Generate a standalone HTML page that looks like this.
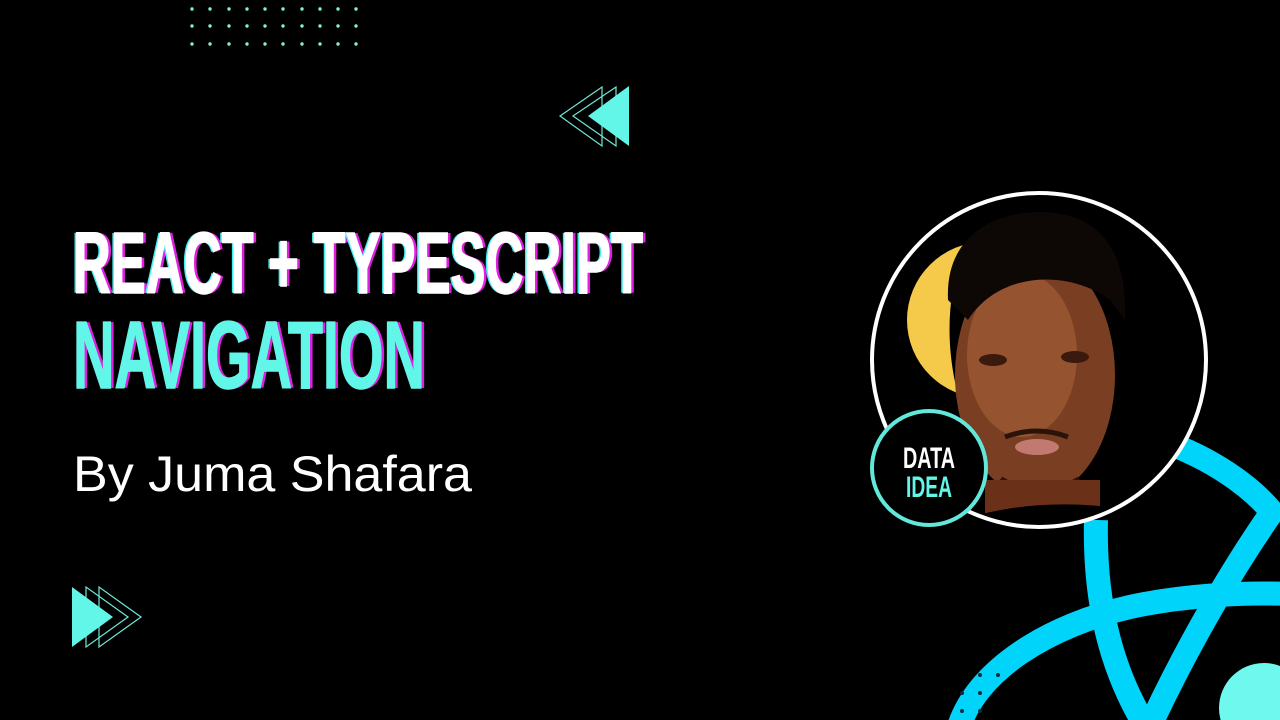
<!DOCTYPE html>
<html><head><meta charset="utf-8"><style>
html,body{margin:0;padding:0;background:#000;width:1280px;height:720px;overflow:hidden}
svg{display:block}
</style></head><body>
<svg width="1280" height="720" viewBox="0 0 1280 720" xmlns="http://www.w3.org/2000/svg">
<rect width="1280" height="720" fill="#000"/>
<g fill="#7ff0e0">
<circle cx="192" cy="9" r="1.7"/><circle cx="210" cy="9" r="1.7"/><circle cx="229" cy="9" r="1.7"/><circle cx="247" cy="9" r="1.7"/><circle cx="265" cy="9" r="1.7"/><circle cx="283" cy="9" r="1.7"/><circle cx="302" cy="9" r="1.7"/><circle cx="320" cy="9" r="1.7"/><circle cx="338" cy="9" r="1.7"/><circle cx="356" cy="9" r="1.7"/>
<circle cx="192" cy="26" r="1.7"/><circle cx="210" cy="26" r="1.7"/><circle cx="229" cy="26" r="1.7"/><circle cx="247" cy="26" r="1.7"/><circle cx="265" cy="26" r="1.7"/><circle cx="283" cy="26" r="1.7"/><circle cx="302" cy="26" r="1.7"/><circle cx="320" cy="26" r="1.7"/><circle cx="338" cy="26" r="1.7"/><circle cx="356" cy="26" r="1.7"/>
<circle cx="192" cy="44" r="1.7"/><circle cx="210" cy="44" r="1.7"/><circle cx="229" cy="44" r="1.7"/><circle cx="247" cy="44" r="1.7"/><circle cx="265" cy="44" r="1.7"/><circle cx="283" cy="44" r="1.7"/><circle cx="302" cy="44" r="1.7"/><circle cx="320" cy="44" r="1.7"/><circle cx="338" cy="44" r="1.7"/><circle cx="356" cy="44" r="1.7"/>
</g>
<polygon points="560,116 602,87 602,146" fill="none" stroke="#6fe8d8" stroke-width="1.2"/>
<polygon points="573,116 616,87 616,146" fill="none" stroke="#6fe8d8" stroke-width="1.2"/>
<polygon points="588,116 629,86 629,146" fill="#62f6e8"/>
<polygon points="99,587 99,647 141,617" fill="none" stroke="#6fe8d8" stroke-width="1.2"/>
<polygon points="86,587 86,647 128,617" fill="none" stroke="#6fe8d8" stroke-width="1.2"/>
<polygon points="72,587 72,647 113,617" fill="#62f6e8"/>
<g font-family="'Liberation Sans Narrow','Liberation Sans',sans-serif" font-weight="bold">
<text x="76" y="293" font-size="87" textLength="570" lengthAdjust="spacingAndGlyphs" fill="#e020e0">REACT + TYPESCRIPT</text>
<text x="71" y="293" font-size="87" textLength="570" lengthAdjust="spacingAndGlyphs" fill="#40f0f0">REACT + TYPESCRIPT</text>
<text x="73" y="293" font-size="87" textLength="570" lengthAdjust="spacingAndGlyphs" fill="#fff" stroke="#fff" stroke-width="1.5">REACT + TYPESCRIPT</text>
<text x="76" y="388" font-size="96" textLength="352" lengthAdjust="spacingAndGlyphs" fill="#e020e0">NAVIGATION</text>
<text x="73" y="388" font-size="96" textLength="352" lengthAdjust="spacingAndGlyphs" fill="#62f6e8" stroke="#62f6e8" stroke-width="1.5">NAVIGATION</text>
</g>
<text x="73" y="491" font-family="'Liberation Sans',sans-serif" font-size="50" textLength="399" lengthAdjust="spacingAndGlyphs" fill="#fff">By Juma Shafara</text>
<g fill="none" stroke="#00d4fa" stroke-width="24">
<path d="M1096,520 C1094,600 1110,670 1148,730"/>
<path d="M1165,442 C1210,458 1250,485 1272,512 C1235,565 1190,640 1148,730"/>
<path d="M958,730 C975,670 1050,625 1130,607 C1180,596 1240,592 1290,594"/>
</g>
<g fill="#062a40"><circle cx="980" cy="675" r="2"/><circle cx="998" cy="675" r="2"/><circle cx="962" cy="693" r="2"/><circle cx="980" cy="693" r="2"/><circle cx="962" cy="711" r="2"/><circle cx="980" cy="711" r="2"/></g>
<circle cx="1264" cy="708" r="45" fill="#6ff8ee"/>
<defs><clipPath id="pc"><circle cx="1039" cy="360" r="166"/></clipPath></defs>
<circle cx="1039" cy="360" r="167" fill="#000"/>
<g clip-path="url(#pc)">
<circle cx="985" cy="320" r="78" fill="#f5c94a"/>
<path d="M968,240 C940,300 945,380 975,440 L1130,440 L1130,230 Z" fill="#000"/>
<ellipse cx="1035" cy="375" rx="80" ry="122" fill="#7a3e22"/>
<ellipse cx="1022" cy="355" rx="55" ry="82" fill="#96532f"/>
<path d="M948,300 C945,235 995,212 1040,212 C1095,212 1128,245 1125,320 L1110,300 C1070,270 1000,270 968,320 Z" fill="#0d0806"/>
<ellipse cx="993" cy="360" rx="14" ry="6" fill="#3a1a0e"/>
<ellipse cx="1075" cy="357" rx="14" ry="6" fill="#3a1a0e"/>
<path d="M1005,437 Q1037,425 1068,437" stroke="#2a140a" stroke-width="5" fill="none"/>
<ellipse cx="1037" cy="447" rx="22" ry="8" fill="#c27a70"/>
<path d="M1000,480 Q1040,505 1080,480" stroke="#2a140a" stroke-width="8" fill="none"/>
<rect x="985" y="480" width="115" height="60" fill="#6a3018"/>
<path d="M960,520 Q1040,495 1130,510 L1130,540 L960,540 Z" fill="#000"/>
</g>
<circle cx="1039" cy="360" r="167" fill="none" stroke="#fff" stroke-width="4"/>
<circle cx="929" cy="468" r="57" fill="#000" stroke="#62e8da" stroke-width="4"/>
<g font-family="'Liberation Sans Narrow','Liberation Sans',sans-serif" font-weight="bold" text-anchor="middle">
<text x="929" y="468" font-size="30" textLength="52" lengthAdjust="spacingAndGlyphs" fill="#fff">DATA</text>
<text x="929" y="497" font-size="30" textLength="46" lengthAdjust="spacingAndGlyphs" fill="#62f6e8">IDEA</text>
</g>
</svg>
</body></html>
